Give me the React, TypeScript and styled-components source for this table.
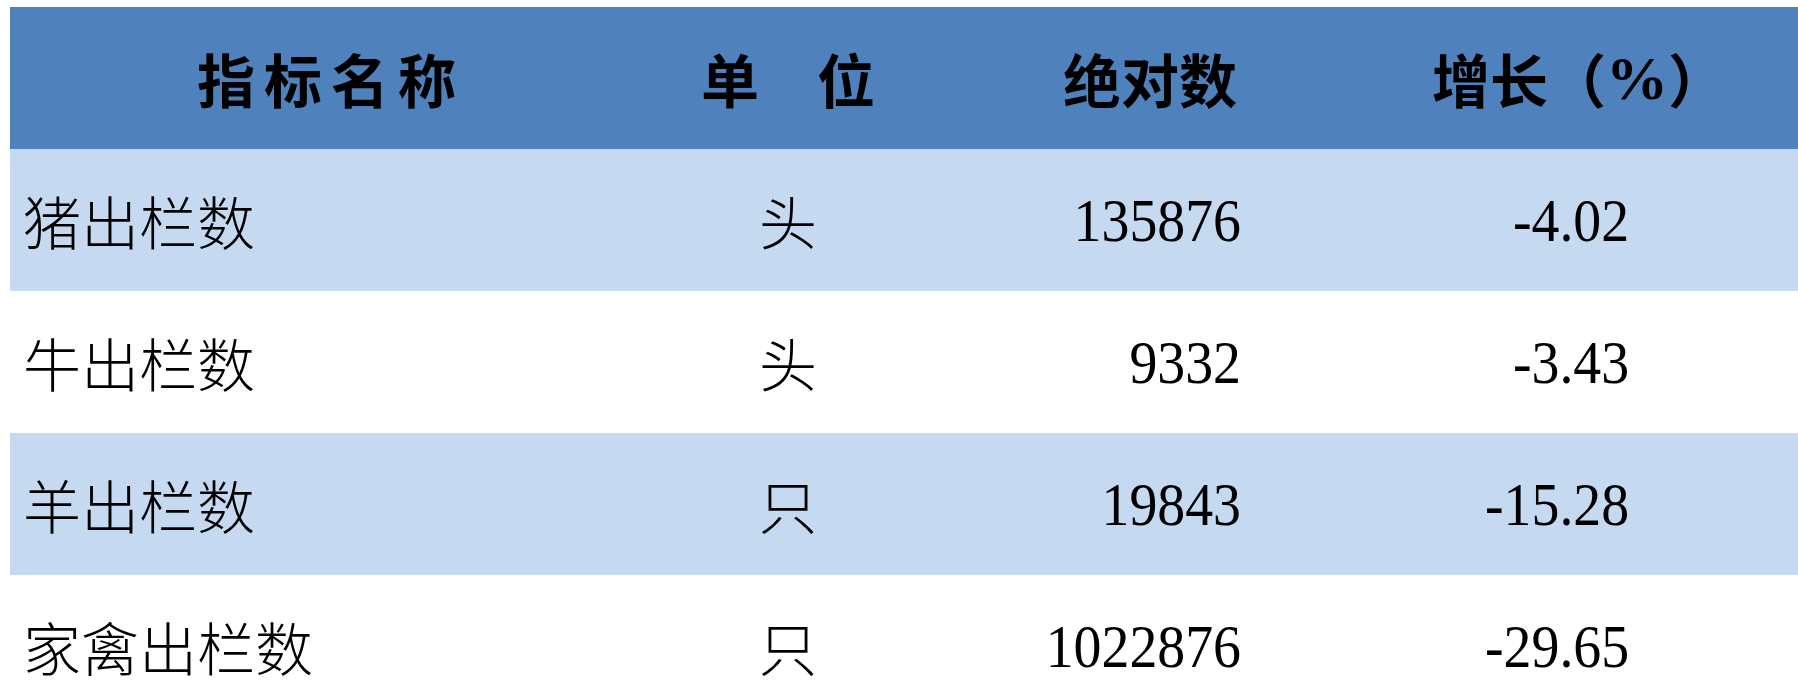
import styled, { createGlobalStyle } from "styled-components";

type Row = {
  name: string;
  unit: string;
  value: string;
  growth: string;
};

const rows: Row[] = [
  { name: "猪出栏数", unit: "头", value: "135876", growth: "-4.02" },
  { name: "牛出栏数", unit: "头", value: "9332", growth: "-3.43" },
  { name: "羊出栏数", unit: "只", value: "19843", growth: "-15.28" },
  { name: "家禽出栏数", unit: "只", value: "1022876", growth: "-29.65" },
];

const GlobalStyle = createGlobalStyle`
  html, body {
    margin: 0;
    padding: 0;
    background: #ffffff;
    overflow: hidden;
  }
  body {
    font-family: "Liberation Serif", "Noto Sans CJK SC", serif;
    color: #000000;
  }
`;

const Page = styled.div`
  width: 1798px;
  height: 695px;
  box-sizing: border-box;
  padding: 7px 0 0 10px;
  overflow: hidden;
`;

const Table = styled.div`
  width: 1788px;
`;

const Line = styled.div<{ $tone: "head" | "band" | "plain" }>`
  display: grid;
  grid-template-columns: 626px 304px 420px 438px;
  height: 142px;
  background: ${(p) =>
    p.$tone === "head" ? "#4f81bd" : p.$tone === "band" ? "#c5d9f0" : "#ffffff"};
`;

const HeadCell = styled.div<{ $shift?: number }>`
  display: flex;
  align-items: center;
  justify-content: center;
  padding-left: ${(p) => p.$shift ?? 0}px;
  font-family: "Noto Sans CJK SC", sans-serif;
  font-weight: 700;
  font-size: 58px;
  line-height: 1;
`;

const Spaced = styled.span`
  letter-spacing: 9px;
`;

const Percent = styled.span`
  font-family: "Liberation Serif", serif;
  font-weight: 700;
  font-size: 62px;
`;

const NameCell = styled.div`
  display: flex;
  align-items: center;
  padding-left: 13px;
  font-family: "Noto Sans CJK SC", sans-serif;
  font-weight: 300;
  font-size: 58px;
  line-height: 1;
`;

const UnitCell = styled(NameCell)`
  justify-content: center;
  padding-left: 0;
`;

const NumberCell = styled.div<{ $right: number }>`
  display: flex;
  align-items: center;
  justify-content: flex-end;
  padding-right: ${(p) => p.$right}px;
`;

const Num = styled.span`
  display: inline-block;
  font-family: "Liberation Serif", "Times New Roman", serif;
  font-size: 62px;
  line-height: 1;
  transform: scaleX(0.9);
  transform-origin: right center;
`;

export default function App() {
  return (
    <>
      <GlobalStyle />
      <Page>
        <Table>
          <Line $tone="head">
            <HeadCell $shift={16}>
              <Spaced>指标名称</Spaced>
            </HeadCell>
            <HeadCell>单　位</HeadCell>
            <HeadCell>绝对数</HeadCell>
            <HeadCell>
              增长（<Percent>%</Percent>）
            </HeadCell>
          </Line>
          {rows.map((r, i) => (
            <Line key={r.name} $tone={i % 2 === 0 ? "band" : "plain"}>
              <NameCell>{r.name}</NameCell>
              <UnitCell>{r.unit}</UnitCell>
              <NumberCell $right={119}>
                <Num>{r.value}</Num>
              </NumberCell>
              <NumberCell $right={169}>
                <Num>{r.growth}</Num>
              </NumberCell>
            </Line>
          ))}
        </Table>
      </Page>
    </>
  );
}
